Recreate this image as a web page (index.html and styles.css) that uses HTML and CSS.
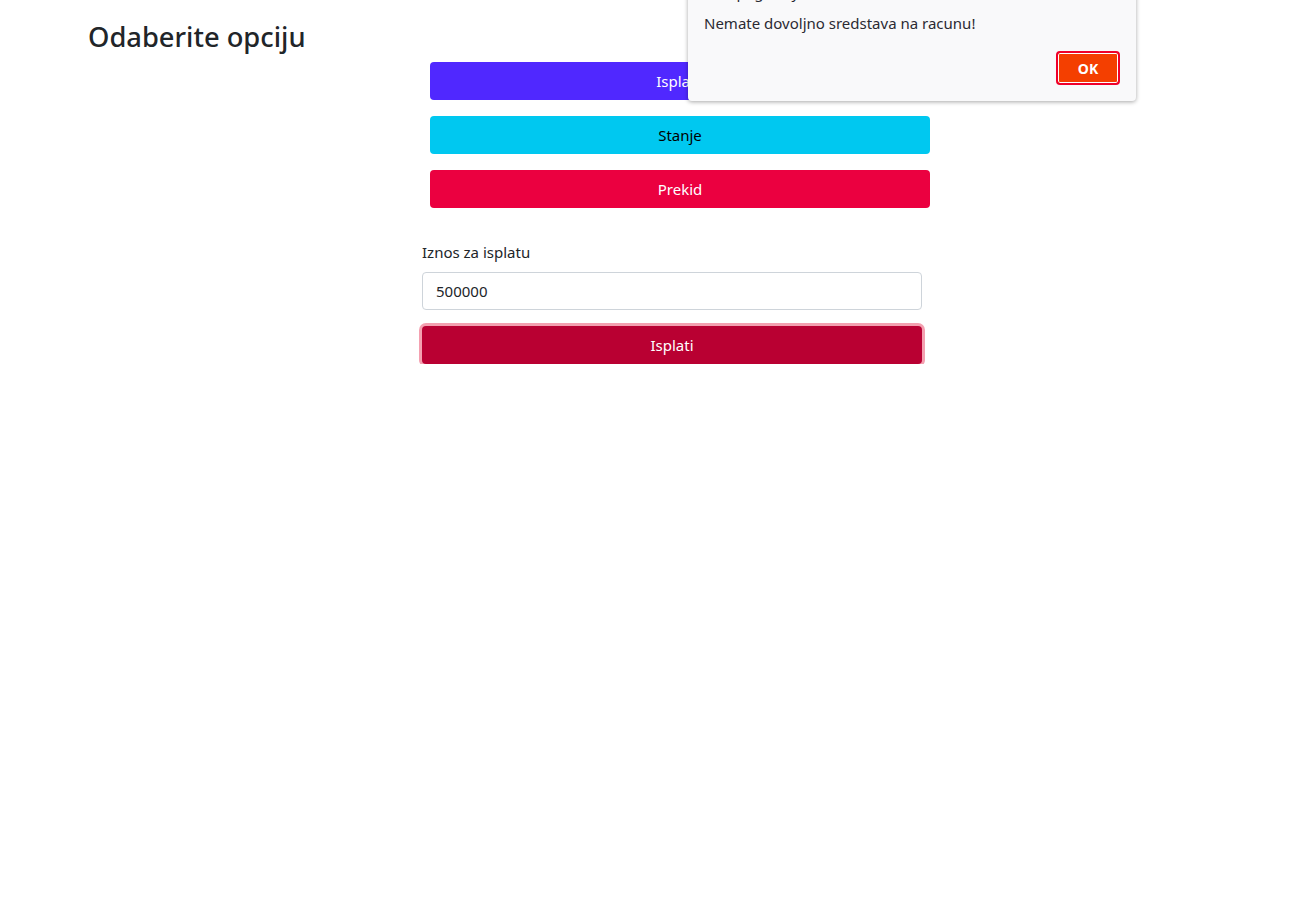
FILE: index.html
```html
<!DOCTYPE html>
<html lang="sr">
<head>
<meta charset="utf-8">
<title>Bankomat</title>
<link rel="stylesheet" href="styles.css">
</head>
<body>
<div class="page">
  <h3 class="title">Odaberite opciju</h3>
  <div class="options">
    <button class="btn btn-primary">Isplata</button>
    <button class="btn btn-info">Stanje</button>
    <button class="btn btn-danger">Prekid</button>
  </div>
  <form class="withdraw">
    <label class="label" for="iznos">Iznos za isplatu</label>
    <input class="input" id="iznos" type="text" value="500000">
    <button type="button" class="btn btn-submit">Isplati</button>
  </form>
</div>
<div class="dialog">
  <div class="dialog-title">This page says</div>
  <div class="dialog-msg">Nemate dovoljno sredstava na racunu!</div>
  <div class="dialog-actions">
    <button class="dialog-ok">OK</button>
  </div>
</div>
</body>
</html>
```
FILE: styles.css
```css
html, body {
  margin: 0;
  padding: 0;
  background: #ffffff;
}
body {
  font-family: "Noto Sans", "Open Sans", sans-serif;
  color: #212529;
}
.page {
  padding: 20px 0 0 88px;
}
.title {
  margin: 0;
  font-size: 27.3px;
  font-weight: 500;
  line-height: 34px;
  color: #212529;
}
.options {
  margin: 8px 0 0 342px;
  width: 500px;
  display: flex;
  flex-direction: column;
  gap: 16px;
}
.btn {
  display: block;
  width: 100%;
  height: 38px;
  border: 0;
  border-radius: 4px;
  font-family: inherit;
  font-size: 15px;
  padding: 0;
  cursor: pointer;
}
.btn-primary { background: #5028ff; color: #ffffff; }
.btn-info { background: #00c8f0; color: #000000; }
.btn-danger { background: #eb0040; color: #ffffff; }
.withdraw {
  margin: 32px 0 0 334px;
  width: 500px;
  display: flex;
  flex-direction: column;
}
.label {
  font-size: 15px;
  line-height: 24px;
  margin-bottom: 8px;
}
.input {
  box-sizing: border-box;
  height: 38px;
  width: 100%;
  border: 1px solid #ced4da;
  border-radius: 4px;
  padding: 0 13px;
  font-family: inherit;
  font-size: 15px;
  color: #212529;
  background: #fff;
}
.btn-submit {
  margin-top: 16px;
  background: #b90032;
  color: #ffffff;
  box-shadow: 0 0 0 3px #f4a0b0;
}
.dialog {
  position: absolute;
  left: 688px;
  top: -17px;
  width: 448px;
  box-sizing: border-box;
  background: #f9f9fa;
  border-radius: 0 0 4px 4px;
  box-shadow: 0 1px 4px rgba(0,0,0,0.35);
  padding: 0 16px 16px 16px;
  font-size: 15px;
  color: #2b2a33;
}
.dialog-title {
  line-height: 18px;
  height: 18px;
}
.dialog-msg {
  margin-top: 11px;
  line-height: 22px;
}
.dialog-actions {
  display: flex;
  justify-content: flex-end;
  margin-top: 17px;
}
.dialog-ok {
  width: 64px;
  height: 34px;
  box-sizing: border-box;
  background: #f43f00;
  color: #fff;
  border: 2px solid #f0002a;
  box-shadow: inset 0 0 0 1px #fff;
  border-radius: 4px;
  font-family: "Noto Sans", sans-serif;
  font-weight: 700;
  font-size: 14px;
  padding: 0;
}
```
